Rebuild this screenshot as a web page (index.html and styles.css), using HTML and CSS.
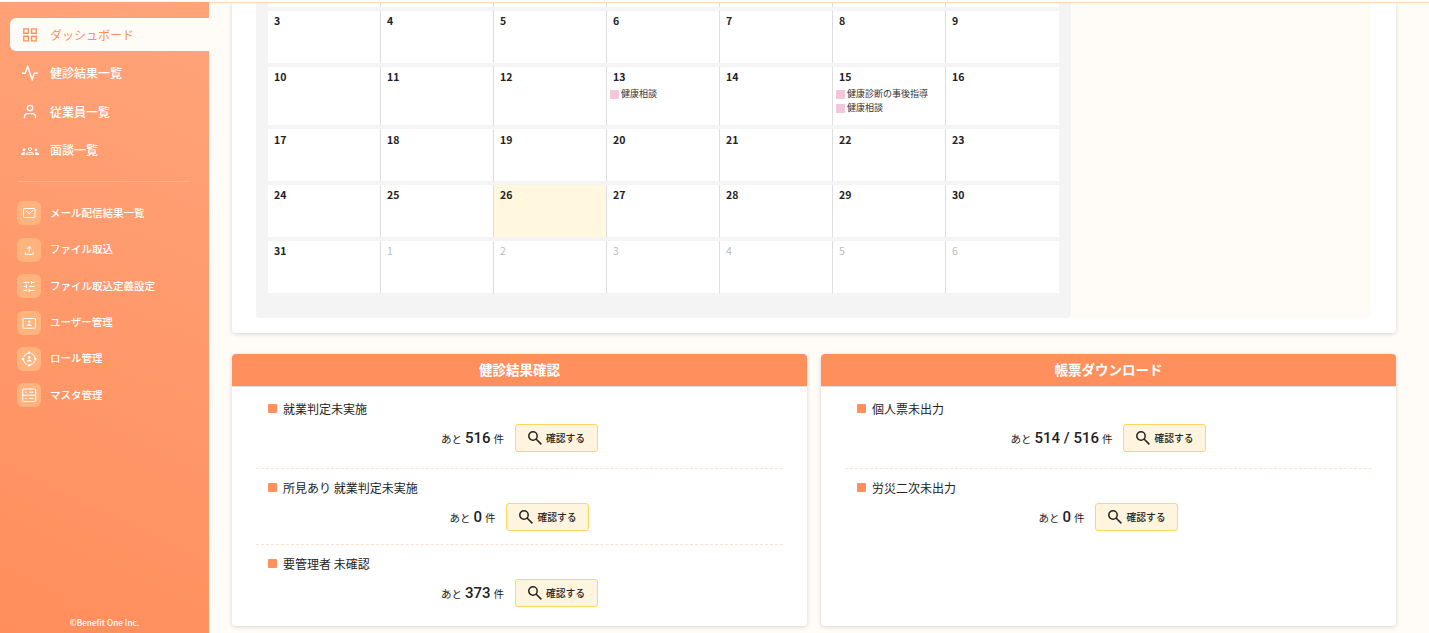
FILE: index.html
```html
<!DOCTYPE html>
<html lang="ja">
<head>
<meta charset="utf-8">
<title>ダッシュボード</title>
<link rel="stylesheet" href="styles.css">
</head>
<body>
<div class="app">
  <aside class="sidebar">
    <nav class="nav-main">
      <a class="nav-item active"><svg class="nav-icon" viewBox="0 0 16 16"><path d="M1.8 1.9h4.6v4.4H1.8zM9.6 1.9h4.6v4.4H9.6zM1.8 9.3h4.6v4.6H1.8zM9.6 9.3h4.6v4.6H9.6z"/></svg><span>ダッシュボード</span></a>
      <a class="nav-item"><svg class="nav-icon" viewBox="0 0 16 16"><path d="M0 8.2h3.2L5.6 1.2l4.5 13.4 2.3-6.4H16"/></svg><span>健診結果一覧</span></a>
      <a class="nav-item"><svg class="nav-icon" viewBox="0 0 16 16"><circle cx="8" cy="4.1" r="2.7"/><path d="M2.5 14.2v-1.4q0-3.2 3.2-3.2h4.6q3.2 0 3.2 3.2v1.4"/></svg><span>従業員一覧</span></a>
      <a class="nav-item"><svg class="nav-icon wide" viewBox="0 0 18 10"><circle cx="9" cy="3" r="1.5"/><path d="M5.2 8.3c.3-2.6 7.3-2.6 7.6 0z"/><g class="solid"><circle cx="3" cy="3.8" r="1.4"/><circle cx="15" cy="3.8" r="1.4"/><path d="M0 9V7.7q1.7-2 4.3-1.2Q3.5 7.5 3.5 9zM18 9V7.7q-1.7-2-4.3-1.2.8 1 .8 2.5z"/></g></svg><span>面談一覧</span></a>
    </nav>
    <nav class="nav-sub">
      <a class="sub-item"><i class="tile"><svg viewBox="0 0 24 24"><rect x="6.5" y="7.5" width="11.5" height="9" rx="1"/><path d="M8.5 9.3l3.7 3.4 3.7-3.4"/></svg></i><span>メール配信結果一覧</span></a>
      <a class="sub-item"><i class="tile"><svg viewBox="0 0 24 24"><path d="M12.2 14.2V8.7M9.8 10.9l2.4-2.4 2.4 2.4M8.2 14v2.4h8V14"/></svg></i><span>ファイル取込</span></a>
      <a class="sub-item"><i class="tile"><svg viewBox="0 0 24 24"><path d="M6.5 8.5h6M14.5 7v3.2M14.5 8.5h3M6.5 12.5h3M9.5 10.8v3.4M12 12.5h5.5M6.5 16.4h3.5M12 14.9v3.2M12 16.4h5.5"/></svg></i><span>ファイル取込定義設定</span></a>
      <a class="sub-item"><i class="tile"><svg viewBox="0 0 24 24"><rect x="6" y="7.5" width="12.5" height="9.7" rx=".6"/><g class="solid"><circle cx="12.2" cy="10.7" r="1.3"/><path d="M9.3 15q2.9-4 5.8 0z"/></g></svg></i><span>ユーザー管理</span></a>
      <a class="sub-item"><i class="tile"><svg viewBox="0 0 24 24"><circle cx="12.2" cy="12" r="5.9" stroke-dasharray="6.3 2.97" stroke-dashoffset="-1.5"/><g class="solid"><circle cx="12.2" cy="5.8" r="1.3"/><circle cx="12.2" cy="18.2" r="1.3"/><circle cx="6" cy="12" r="1.3"/><circle cx="18.4" cy="12" r="1.3"/><circle cx="12.2" cy="10.4" r="1.3"/><path d="M9.4 14.5q2.8-4 5.6 0z"/></g></svg></i><span>ロール管理</span></a>
      <a class="sub-item"><i class="tile"><svg viewBox="0 0 24 24"><rect x="5.7" y="6" width="13" height="12.5" rx="1"/><path d="M5.7 12.2h13M8.3 9.2h1.4M12 9.2h4.2M8.3 15.4h1.4M12 15.4h4.2"/></svg></i><span>マスタ管理</span></a>
    </nav>
    <footer class="copyright">©Benefit One Inc.</footer>
  </aside>
  <main class="content">
    <section class="card schedule">
      <div class="calendar">
        <div class="week first"><div></div><div></div><div></div><div></div><div></div><div></div><div></div></div>
        <div class="week"><div>3</div><div>4</div><div>5</div><div>6</div><div>7</div><div>8</div><div>9</div></div>
        <div class="week tall"><div>10</div><div>11</div><div>12</div><div>13<p class="event">健康相談</p></div><div>14</div><div>15<p class="event">健康診断の事後指導</p><p class="event">健康相談</p></div><div>16</div></div>
        <div class="week lower"><div>17</div><div>18</div><div>19</div><div>20</div><div>21</div><div>22</div><div>23</div></div>
        <div class="week"><div>24</div><div>25</div><div class="today">26</div><div>27</div><div>28</div><div>29</div><div>30</div></div>
        <div class="week"><div>31</div><div class="other">1</div><div class="other">2</div><div class="other">3</div><div class="other">4</div><div class="other">5</div><div class="other">6</div></div>
      </div>
      <div class="detail"></div>
    </section>
    <div class="panels">
      <section class="card panel">
        <h2>健診結果確認</h2>
        <div class="task"><h3>就業判定未実施</h3><div class="action"><span>あと <b>516</b> 件</span><button><svg viewBox="0 0 14 14"><circle cx="5" cy="5" r="4.2"/><path d="M8 8l5.4 5.4"/></svg>確認する</button></div></div>
        <div class="task"><h3>所見あり 就業判定未実施</h3><div class="action"><span>あと <b>0</b> 件</span><button><svg viewBox="0 0 14 14"><circle cx="5" cy="5" r="4.2"/><path d="M8 8l5.4 5.4"/></svg>確認する</button></div></div>
        <div class="task"><h3>要管理者 未確認</h3><div class="action"><span>あと <b>373</b> 件</span><button><svg viewBox="0 0 14 14"><circle cx="5" cy="5" r="4.2"/><path d="M8 8l5.4 5.4"/></svg>確認する</button></div></div>
      </section>
      <section class="card panel">
        <h2>帳票ダウンロード</h2>
        <div class="task"><h3>個人票未出力</h3><div class="action"><span>あと <b>514 / 516</b> 件</span><button><svg viewBox="0 0 14 14"><circle cx="5" cy="5" r="4.2"/><path d="M8 8l5.4 5.4"/></svg>確認する</button></div></div>
        <div class="task"><h3>労災二次未出力</h3><div class="action"><span>あと <b>0</b> 件</span><button><svg viewBox="0 0 14 14"><circle cx="5" cy="5" r="4.2"/><path d="M8 8l5.4 5.4"/></svg>確認する</button></div></div>
      </section>
    </div>
  </main>
</div>
</body>
</html>
```
FILE: styles.css
```css
* { box-sizing: border-box; }
body {
  margin: 0;
  overflow: hidden;
  background: #fff;
  color: #222;
  font-family: "Noto Sans CJK JP", "Noto Sans", sans-serif;
}
h2, h3, p { margin: 0; }
svg { fill: none; stroke: currentColor; }
.solid { fill: currentColor; stroke: none; }
.app { display: flex; height: 633px; padding-top: 2px; }

.sidebar {
  display: flex;
  flex-direction: column;
  flex: none;
  width: 209px;
  color: #fff;
  background: linear-gradient(205deg, #ffa47a, #ff8e5c);
}
.nav-main {
  display: flex;
  flex-direction: column;
  gap: 5.8px;
  margin-left: 10px;
  padding-top: 16px;
}
.nav-item {
  display: flex;
  align-items: center;
  gap: 12px;
  height: 33px;
  padding-left: 12px;
  font-size: 12px;
  font-weight: 500;
  border-radius: 6px 0 0 6px;
}
.nav-item span, .sub-item span { padding-bottom: 2px; }
.nav-item.active span { padding-bottom: 0; }
.nav-item.active { color: #ff8e5c; background: #fffcf7; font-weight: 400; }
.nav-icon { width: 16px; height: 16px; stroke-width: 1.4; }
.nav-icon.wide { width: 18px; height: 10px; margin: 0 -1px; stroke-width: 1; }
.nav-sub {
  display: flex;
  flex-direction: column;
  gap: 12.4px;
  margin: 14px 19px 0 18px;
  padding-top: 19px;
  border-top: 1px solid #ffb086;
}
.sub-item {
  display: flex;
  align-items: center;
  gap: 9px;
  height: 24px;
  margin-left: -1px;
  font-size: 10.5px;
  font-weight: 500;
  white-space: nowrap;
}
.tile { width: 24px; height: 24px; border-radius: 6px; background: #ffb37d; }
.tile svg { display: block; width: 24px; height: 24px; stroke-width: 1; }
.copyright {
  margin-top: auto;
  padding: 0 0 5px;
  font-size: 8.25px;
  line-height: 12px;
  font-weight: 500;
  text-align: center;
}

.content {
  flex: 1;
  padding-left: 23px;
  border-top: 1px solid #ffd9bb;
  background: #fffcf7;
}
.card {
  background: #fff;
  box-shadow: 0 1px 4px rgba(0, 0, 0, .16);
  border-radius: 4px;
}
.schedule {
  display: flex;
  width: 1164px;
  height: 330px;
  padding: 0 25px 15px 24px;
  border-radius: 0 0 4px 4px;
  clip-path: inset(0 -6px -6px -6px);
}
.calendar {
  display: flex;
  flex-direction: column;
  gap: 4px;
  width: 815px;
  padding: 0 12px;
  background: #f4f4f4;
  border-radius: 0 0 3px 3px;
}
.detail { flex: 1; background: #fffcf7; }
.week {
  display: grid;
  grid-template-columns: repeat(7, 1fr);
  height: 52px;
  background: #fff;
  font-size: 10.5px;
  line-height: 16px;
  font-weight: 700;
}
.week.first { height: 4px; }
.week.tall { height: 58px; }
.week > div { padding: 2px 0 0 6px; border-right: 1px solid #ddd; }
.week.first > div { padding: 0; }
.week.lower > div { padding-top: 3px; }
.week > div:last-child { border-right: 0; }
.week .today { background: #fff8df; }
.week .other { color: #bbb; font-weight: 400; }
.event {
  display: flex;
  align-items: center;
  gap: 2px;
  height: 14px;
  margin-left: -3px;
  color: #333;
  font-size: 9px;
  line-height: 14px;
  font-weight: 400;
  white-space: nowrap;
}
.event:first-of-type { margin-top: 2px; }
.event::before { content: ""; width: 9px; height: 9px; border-radius: 1px; background: #f4c6da; }

.panels {
  display: grid;
  grid-template-columns: 575px 575px;
  gap: 14px;
  height: 272px;
  margin-top: 21px;
}
.panel h2 {
  height: 33px;
  color: #fff;
  background: #ff8f5d;
  border-bottom: 1px solid #ddd;
  border-radius: 4px 4px 0 0;
  font-size: 13.5px;
  line-height: 31px;
  font-weight: 700;
  text-align: center;
}
.task { height: 76px; margin: 0 24px; padding-top: 9px; border-bottom: 1px dashed #ffe0cf; }
h2 + .task { height: 82px; padding-top: 12px; }
.task:last-child { border-bottom: 0; }
.task h3 {
  display: flex;
  align-items: center;
  gap: 6px;
  height: 18px;
  padding-left: 12px;
  font-size: 12px;
  font-weight: 400;
}
.task h3::before { content: ""; width: 9px; height: 9px; margin-top: 1px; border-radius: 1px; background: #ff8f5d; }
.action {
  display: flex;
  justify-content: center;
  align-items: center;
  gap: 11px;
  height: 28px;
  margin-top: 7px;
  font-size: 10.5px;
}
.action b { margin: 0 .6px; font: 500 15px Roboto, sans-serif; }
.action button {
  display: flex;
  align-items: center;
  justify-content: center;
  gap: 4px;
  width: 83px;
  height: 28px;
  padding: 0;
  color: #222;
  background: #fff5df;
  border: 1px solid #ffd564;
  border-radius: 3px;
  font: 500 9.75px "Noto Sans CJK JP", sans-serif;
}
.action svg { width: 14px; height: 14px; stroke-width: 1.5; }
```
